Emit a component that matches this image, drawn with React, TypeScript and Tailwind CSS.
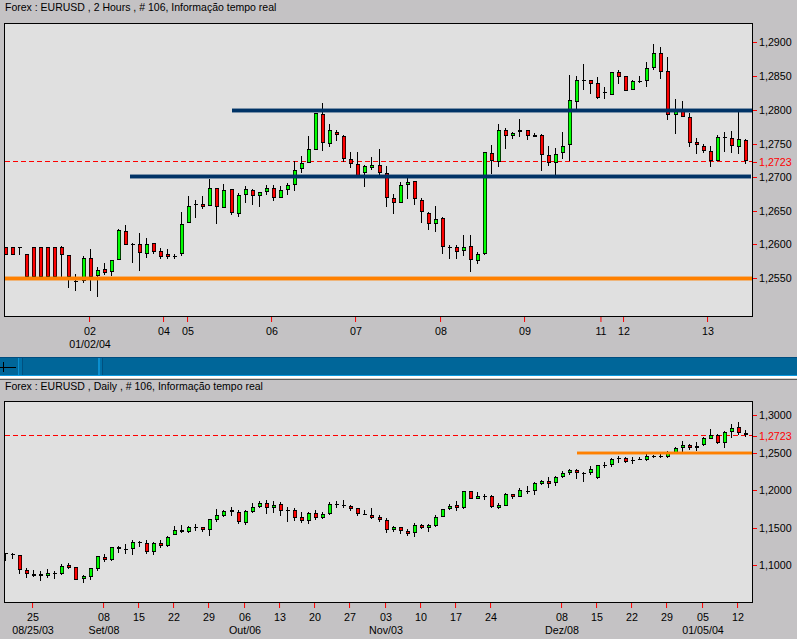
type C = [number, number, number, number, string];

// Each group: [first y of the group's scale]; values are thirds of a pixel above that y
const top1: C[] = [
  [201,201,224,224,"r"],[201,201,224,224,"r"],[201,201,203,224,"d"],[222,222,292,292,"r"],[201,201,292,292,"r"],[201,201,292,292,"r"],[201,201,292,292,"r"],[201,201,292,292,"r"],[198,201,224,290,"r"],[225,225,292,323,"r"],
  [282,302,304,332,"d"],[228,235,303,310,"g"],[207,235,292,332,"r"],[262,271,287,350,"g"],[250,268,278,285,"r"],[241,241,277,288,"g"],[148,150,241,241,"g"],[135,154,196,196,"r"],[188,192,196,248,"d"],[159,193,220,272,"r"],
  [175,193,223,233,"g"],[190,190,215,222,"r"],[205,214,230,236,"r"],[207,223,230,236,"r"],[223,228,230,236,"d"],[97,133,223,228,"g"],[48,79,130,130,"g"],[60,73,76,113,"d"],[48,73,80,87,"r"],[-3,25,79,79,"g"],
  [25,25,82,132,"r"],[12,31,85,85,"g"],[28,28,100,105,"r"],[40,46,103,110,"g"],[18,28,46,70,"g"],[28,31,49,76,"r"],[37,37,49,81,"g"],
];
const top2: C[] = [
  [285,295,307,315,"g"],[285,295,325,332,"r"],[289,301,325,325,"g"],[280,286,301,315,"g"],[213,241,286,302,"g"],[198,220,238,248,"g"],[138,178,220,220,"g"],[70,70,181,181,"g"],[40,73,160,183,"r"],[102,121,163,170,"g"],
  [120,127,136,152,"r"],[136,139,208,215,"r"],[186,208,223,233,"r"],[186,223,260,262,"r"],[226,229,250,290,"g"],[202,226,233,240,"g"],[178,226,250,256,"r"],[229,250,325,350,"r"],[312,325,340,372,"r"],[277,286,340,340,"g"],
  [265,277,286,326,"g"],[274,274,328,344,"r"],[325,331,367,398,"r"],[367,370,403,420,"r"],[349,388,401,425,"g"],[382,385,472,492,"r"],[466,471,473,506,"d"],[466,472,487,506,"r"],[436,472,484,498,"g"],[436,469,511,545,"r"],
  [487,493,514,521,"g"],[187,187,493,496,"g"],[166,190,214,251,"r"],[103,121,216,231,"g"],[115,121,139,177,"r"],[127,130,139,147,"g"],[88,121,127,141,"g"],[121,121,139,150,"r"],
];
const top3: C[] = [
  [308,315,320,320,"d"],[313,316,376,422,"r"],[349,376,400,407,"r"],[355,373,400,435,"g"],[307,349,370,388,"g"],[135,211,346,394,"g"],[139,151,215,238,"g"],[102,149,152,180,"d"],[151,151,161,192,"r"],[142,160,205,208,"r"],
  [172,185,187,206,"d"],[127,127,196,196,"g"],[121,127,142,162,"r"],[139,139,184,184,"r"],[151,154,181,181,"g"],[139,153,156,160,"d"],[97,115,154,170,"g"],[42,70,115,121,"g"],[52,70,127,147,"r"],[82,124,256,270,"r"],
  [207,238,256,311,"g"],[213,238,262,262,"r"],[250,262,340,350,"r"],[323,337,346,372,"r"],[343,349,364,370,"r"],[349,364,394,410,"r"],[316,322,394,394,"g"],[307,322,324,367,"d"],[304,325,349,368,"r"],[244,328,352,371,"g"],[328,331,394,402,"r"],
];
const low1: C[] = [
  [640,640,643,662,"d"],[639,643,646,656,"d"],[646,646,691,701,"r"],[684,691,703,713,"r"],[690,703,707,710,"d"],[693,703,707,722,"d"],[687,700,707,713,"g"],[693,699,701,717,"d"],[672,679,701,705,"g"],[669,676,683,687,"r"],
  [682,682,719,719,"r"],[705,709,716,729,"g"],[685,685,710,720,"g"],[649,649,686,693,"g"],[642,652,659,666,"r"],[622,622,659,662,"g"],[618,622,628,638,"r"],[612,628,630,642,"d"],[600,607,628,645,"g"],[603,606,608,620,"d"],
  [600,610,635,642,"r"],[606,610,635,645,"g"],[600,610,617,624,"r"],[588,592,617,620,"g"],[558,571,586,586,"g"],[555,571,575,578,"d"],[559,562,575,578,"g"],[552,561,563,572,"d"],[562,562,571,575,"r"],[538,538,569,588,"g"],
  [507,526,539,546,"g"],[510,514,527,530,"g"],[502,511,517,528,"r"],[511,517,545,552,"r"],[511,514,549,555,"g"],[490,502,515,518,"g"],[484,490,502,504,"g"],
];
const low2: C[] = [
  [181,190,205,222,"r"],[184,196,205,219,"g"],[187,193,214,228,"r"],[202,211,214,245,"d"],[205,211,233,242,"r"],[217,232,242,248,"r"],[217,220,242,251,"g"],[211,220,233,239,"r"],[217,223,233,236,"g"],[187,193,223,226,"g"],
  [184,193,196,205,"d"],[181,196,199,203,"d"],[196,199,208,212,"r"],[205,205,223,227,"r"],[211,223,226,226,"d"],[205,226,233,236,"r"],[226,232,241,247,"r"],[235,241,271,278,"r"],[258,262,271,277,"g"],[262,262,274,281,"r"],
  [268,274,281,288,"r"],[250,256,280,290,"g"],[252,256,265,268,"r"],[252,256,265,275,"g"],[226,232,257,260,"g"],[208,208,232,232,"g"],[193,199,208,211,"g"],[184,196,205,212,"r"],[154,154,205,208,"g"],[154,154,178,178,"r"],
  [157,169,178,178,"g"],[163,168,170,181,"d"],[166,169,200,203,"r"],[190,196,203,206,"g"],[160,163,197,199,"g"],[163,163,170,176,"r"],[145,151,170,172,"g"],[139,153,155,163,"d"],
];
const low3: C[] = [
  [247,250,274,285,"g"],[241,244,251,255,"g"],[232,244,251,263,"r"],[229,232,250,258,"g"],[214,220,232,235,"g"],[206,211,220,226,"g"],[207,211,220,236,"r"],[217,219,221,245,"d"],[199,208,220,224,"g"],[196,196,235,238,"g"],
  [187,195,197,203,"d"],[175,178,196,202,"g"],[169,174,176,189,"d"],[172,175,185,190,"r"],[170,181,184,191,"d"],[172,178,181,181,"d"],[163,169,181,183,"g"],[166,168,170,174,"d"],[163,169,172,173,"d"],[154,160,172,173,"g"],
  [142,145,158,158,"g"],[124,136,145,155,"g"],[132,136,145,149,"r"],[127,139,145,152,"g"],[112,115,136,139,"g"],[87,106,116,118,"g"],[103,106,128,131,"r"],[94,97,128,143,"g"],[72,85,97,113,"g"],[66,82,100,105,"r"],[91,100,106,110,"r"],
];

const shift = (rows: C[], base: number): C[] =>
  rows.map(([a, b, c, d, t]) => [base + a / 3, base + b / 3, base + c / 3, base + d / 3, t]);

const upper = [...shift(top1, 180), ...shift(top2, 90), ...shift(top3, 30)];
const lower = [...shift(low1, 340), ...shift(low2, 440), ...shift(low3, 400)];

function Candles({ rows }: { rows: C[] }) {
  return (
    <g>
      {rows.map(([hi, top, bot, lo, t], i) => {
        const left = Math.round(6 + (i * 740) / 105) - 2;
        const y0 = Math.round(top);
        const y1 = Math.max(Math.round(bot), y0 + 1);
        const fill = t === "g" ? "#00ff00" : "#ff0000";
        return (
          <g key={i}>
            <rect x={left + 1} y={Math.round(hi)} width={1} height={Math.max(Math.round(lo) - Math.round(hi), 1)} fill="#000" shapeRendering="crispEdges" />
            <rect x={left} y={y0} width={4} height={y1 - y0} fill="#000" shapeRendering="crispEdges" />
            {t !== "d" && y1 - y0 > 2 && <rect x={left + 0.75} y={y0 + 1} width={2.5} height={y1 - y0 - 2} fill={fill} />}
          </g>
        );
      })}
    </g>
  );
}

function Band({ x1, x2, y, color, h = 3 }: { x1: number; x2: number; y: number; color: string; h?: number }) {
  return (
    <g shapeRendering="crispEdges">
      <rect x={x1} y={y - 1} width={x2 - x1} height={h + 2} fill={color} opacity={0.45} />
      <rect x={x1} y={y} width={x2 - x1} height={h} fill={color} />
    </g>
  );
}

function PriceAxis({ items }: { items: [string, number, boolean?][] }) {
  return (
    <div className="relative w-[44px]">
      {items.map(([label, y, red]) => (
        <div key={label} className="absolute left-0 flex h-[12px] -translate-y-1/2 items-center" style={{ top: y }}>
          <span className="h-px w-[4px] bg-[#ff0000]" />
          <span className={`ml-[2px] ${red ? "text-[#ff0000]" : "text-black"}`}>{label}</span>
        </div>
      ))}
    </div>
  );
}

function TimeAxis({ h, ticks, dates }: { h: number; ticks: [string, number][]; dates: [string, number][] }) {
  return (
    <div className="relative" style={{ height: h }}>
      {ticks.map(([label, x]) => (
        <div key={x} className="absolute top-0 flex -translate-x-1/2 flex-col items-center" style={{ left: x }}>
          <span className="h-[5px] w-px bg-[#ff0000]" />
          <span className="mt-[3px] leading-[13px] text-black">{label}</span>
        </div>
      ))}
      {dates.map(([label, x]) => (
        <span key={x} className="absolute top-[21px] -translate-x-1/2 leading-[13px] text-black" style={{ left: x }}>
          {label}
        </span>
      ))}
    </div>
  );
}

export default function App() {
  return (
    <div className="flex h-[639px] w-[797px] flex-col overflow-hidden bg-[#c4c2c4] font-['Liberation_Sans',Arial,sans-serif] text-[10.7px]">
      <div className="h-[23px] pl-[5px] pt-px text-[10.5px] leading-[13px] text-black">
        Forex : EURUSD , 2 Hours , # 106, Informação tempo real
      </div>
      <div className="flex h-[294px] pl-[4px]">
        <div className="h-[294px] w-[749px] border border-black bg-[#e0e0e0]">
          <svg width={747} height={292} viewBox="5 24 747 292" className="block">
            <line x1={5} x2={752} y1={161.5} y2={161.5} stroke="#ff0000" strokeDasharray="5 3" shapeRendering="crispEdges" />
            <Candles rows={upper} />
            <Band x1={232} x2={752} y={109} color="#003366" />
            <Band x1={130} x2={751} y={175} color="#003366" />
            <Band x1={5} x2={752} y={277} color="#ff8000" />
          </svg>
        </div>
        <PriceAxis
          items={[
            ["1,2900", 19],
            ["1,2850", 53],
            ["1,2800", 87],
            ["1,2750", 121],
            ["1,2723", 139, true],
            ["1,2700", 154],
            ["1,2650", 188],
            ["1,2600", 221],
            ["1,2550", 255],
          ]}
        />
      </div>
      <TimeAxis
        h={40}
        ticks={[
          ["02", 90],
          ["04", 164],
          ["05", 188],
          ["06", 272],
          ["07", 356],
          ["08", 441],
          ["09", 525],
          ["11", 601],
          ["12", 624],
          ["13", 708],
        ]}
        dates={[["01/02/04", 90]]}
      />

      <div className="flex h-[18px] border-t border-[#004d80] bg-[#006699]">
        <div className="w-[18px]">
          <svg width={18} height={17} viewBox="0 0 18 17" className="block">
            <path d="M0 9.5H16M3.5 4V14" stroke="#000" fill="none" shapeRendering="crispEdges" />
          </svg>
        </div>
        <div className="flex w-[5px]">
          <div className="w-[1px] bg-[#0a8fd0]" />
          <div className="w-[3px] bg-[#006fa6]" />
          <div className="w-[1px] bg-[#00507f]" />
        </div>
        <div className="w-[75px]" />
        <div className="flex w-[5px]">
          <div className="w-[2px] bg-[#0a8fd0]" />
          <div className="w-[2px] bg-[#006fa6]" />
          <div className="w-[1px] bg-[#00507f]" />
        </div>
        <div className="flex-1" />
      </div>
      <div className="h-px bg-[#0a9ae0]" />
      <div className="h-[2px] bg-white" />
      <div className="h-px bg-[#d8d4cc]" />
      <div className="h-px bg-[#5a5a5a]" />

      <div className="h-[21px] pl-[5px] text-[10.5px] leading-[13px] text-black">
        Forex : EURUSD , Daily , # 106, Informação tempo real
      </div>
      <div className="flex h-[202px] pl-[4px]">
        <div className="h-[202px] w-[749px] border border-black bg-[#e0e0e0]">
          <svg width={747} height={200} viewBox="5 402 747 200" className="block">
            <line x1={5} x2={752} y1={435.5} y2={435.5} stroke="#ff0000" strokeDasharray="5 3" shapeRendering="crispEdges" />
            <Candles rows={lower} />
            <Band x1={577} x2={752} y={452} color="#ff8000" h={2} />
          </svg>
        </div>
        <PriceAxis
          items={[
            ["1,3000", 14],
            ["1,2723", 35, true],
            ["1,2500", 52],
            ["1,2000", 89],
            ["1,1500", 127],
            ["1,1000", 164],
          ]}
        />
      </div>
      <TimeAxis
        h={36}
        ticks={[
          ["25", 33],
          ["08", 104],
          ["15", 139],
          ["22", 174],
          ["29", 209],
          ["06", 245],
          ["13", 280],
          ["20", 315],
          ["27", 350],
          ["03", 386],
          ["10", 421],
          ["17", 456],
          ["24", 491],
          ["08", 562],
          ["15", 597],
          ["22", 632],
          ["29", 667],
          ["05", 703],
          ["12", 738],
        ]}
        dates={[
          ["08/25/03", 33],
          ["Set/08", 104],
          ["Out/06", 245],
          ["Nov/03", 386],
          ["Dez/08", 562],
          ["01/05/04", 703],
        ]}
      />
    </div>
  );
}
